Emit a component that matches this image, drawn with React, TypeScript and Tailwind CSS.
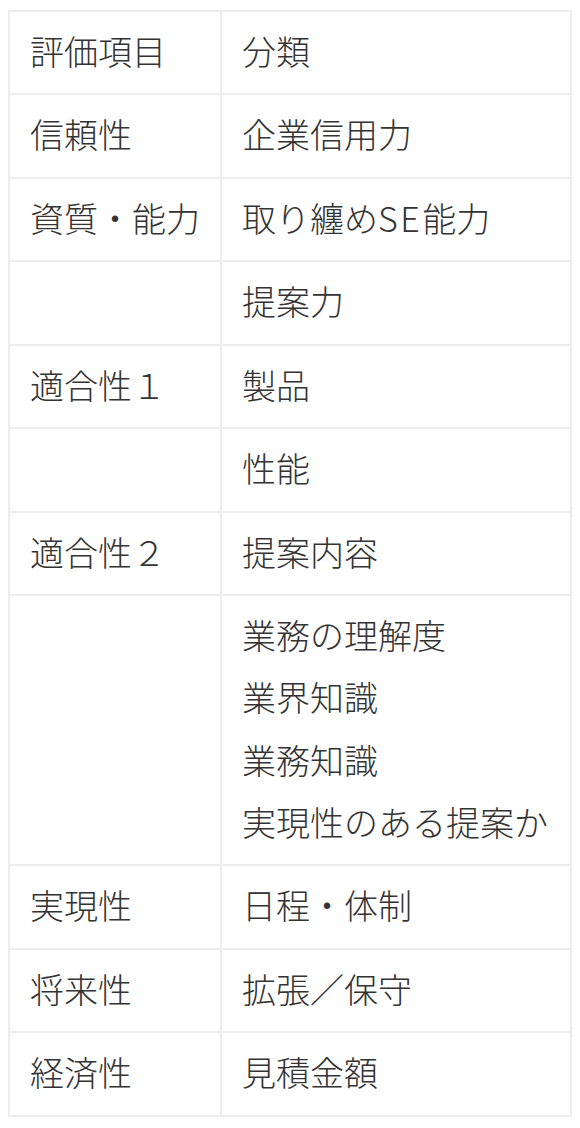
import React from "react";

const rows: [string, React.ReactNode[]][] = [
  ["評価項目", ["分類"]],
  ["信頼性", ["企業信用力"]],
  [
    "資質・能力",
    [
      <>
        取り纏め<span className="tracking-[2.5px]">SE</span>能力
      </>,
    ],
  ],
  ["", ["提案力"]],
  ["適合性１", ["製品"]],
  ["", ["性能"]],
  ["適合性２", ["提案内容"]],
  ["", ["業務の理解度", "業界知識", "業務知識", "実現性のある提案か"]],
  ["実現性", ["日程・体制"]],
  ["将来性", ["拡張／保守"]],
  ["経済性", ["見積金額"]],
];

export default function App() {
  return (
    <div
      className="min-h-[1128px] w-[580px] bg-white pl-[8px] pt-[10px] text-[#333333]"
      style={{ fontFamily: '"Noto Sans CJK JP", sans-serif' }}
    >
      <table className="w-[564px] border-collapse border-2 border-[#ededed] text-[34px] font-light leading-[62.2px]">
        <tbody>
          {rows.map(([a, b], i) => (
            <tr key={i}>
              <td className="w-[212px] border-2 border-[#ededed] px-[20px] pt-[7.9px] pb-[11.4px] align-top whitespace-nowrap">
                {a}
              </td>
              <td className="border-2 border-[#ededed] px-[20px] pt-[7.9px] pb-[11.4px] align-top whitespace-nowrap">
                {b.map((t, j) => (
                  <div key={j}>{t}</div>
                ))}
              </td>
            </tr>
          ))}
        </tbody>
      </table>
    </div>
  );
}
